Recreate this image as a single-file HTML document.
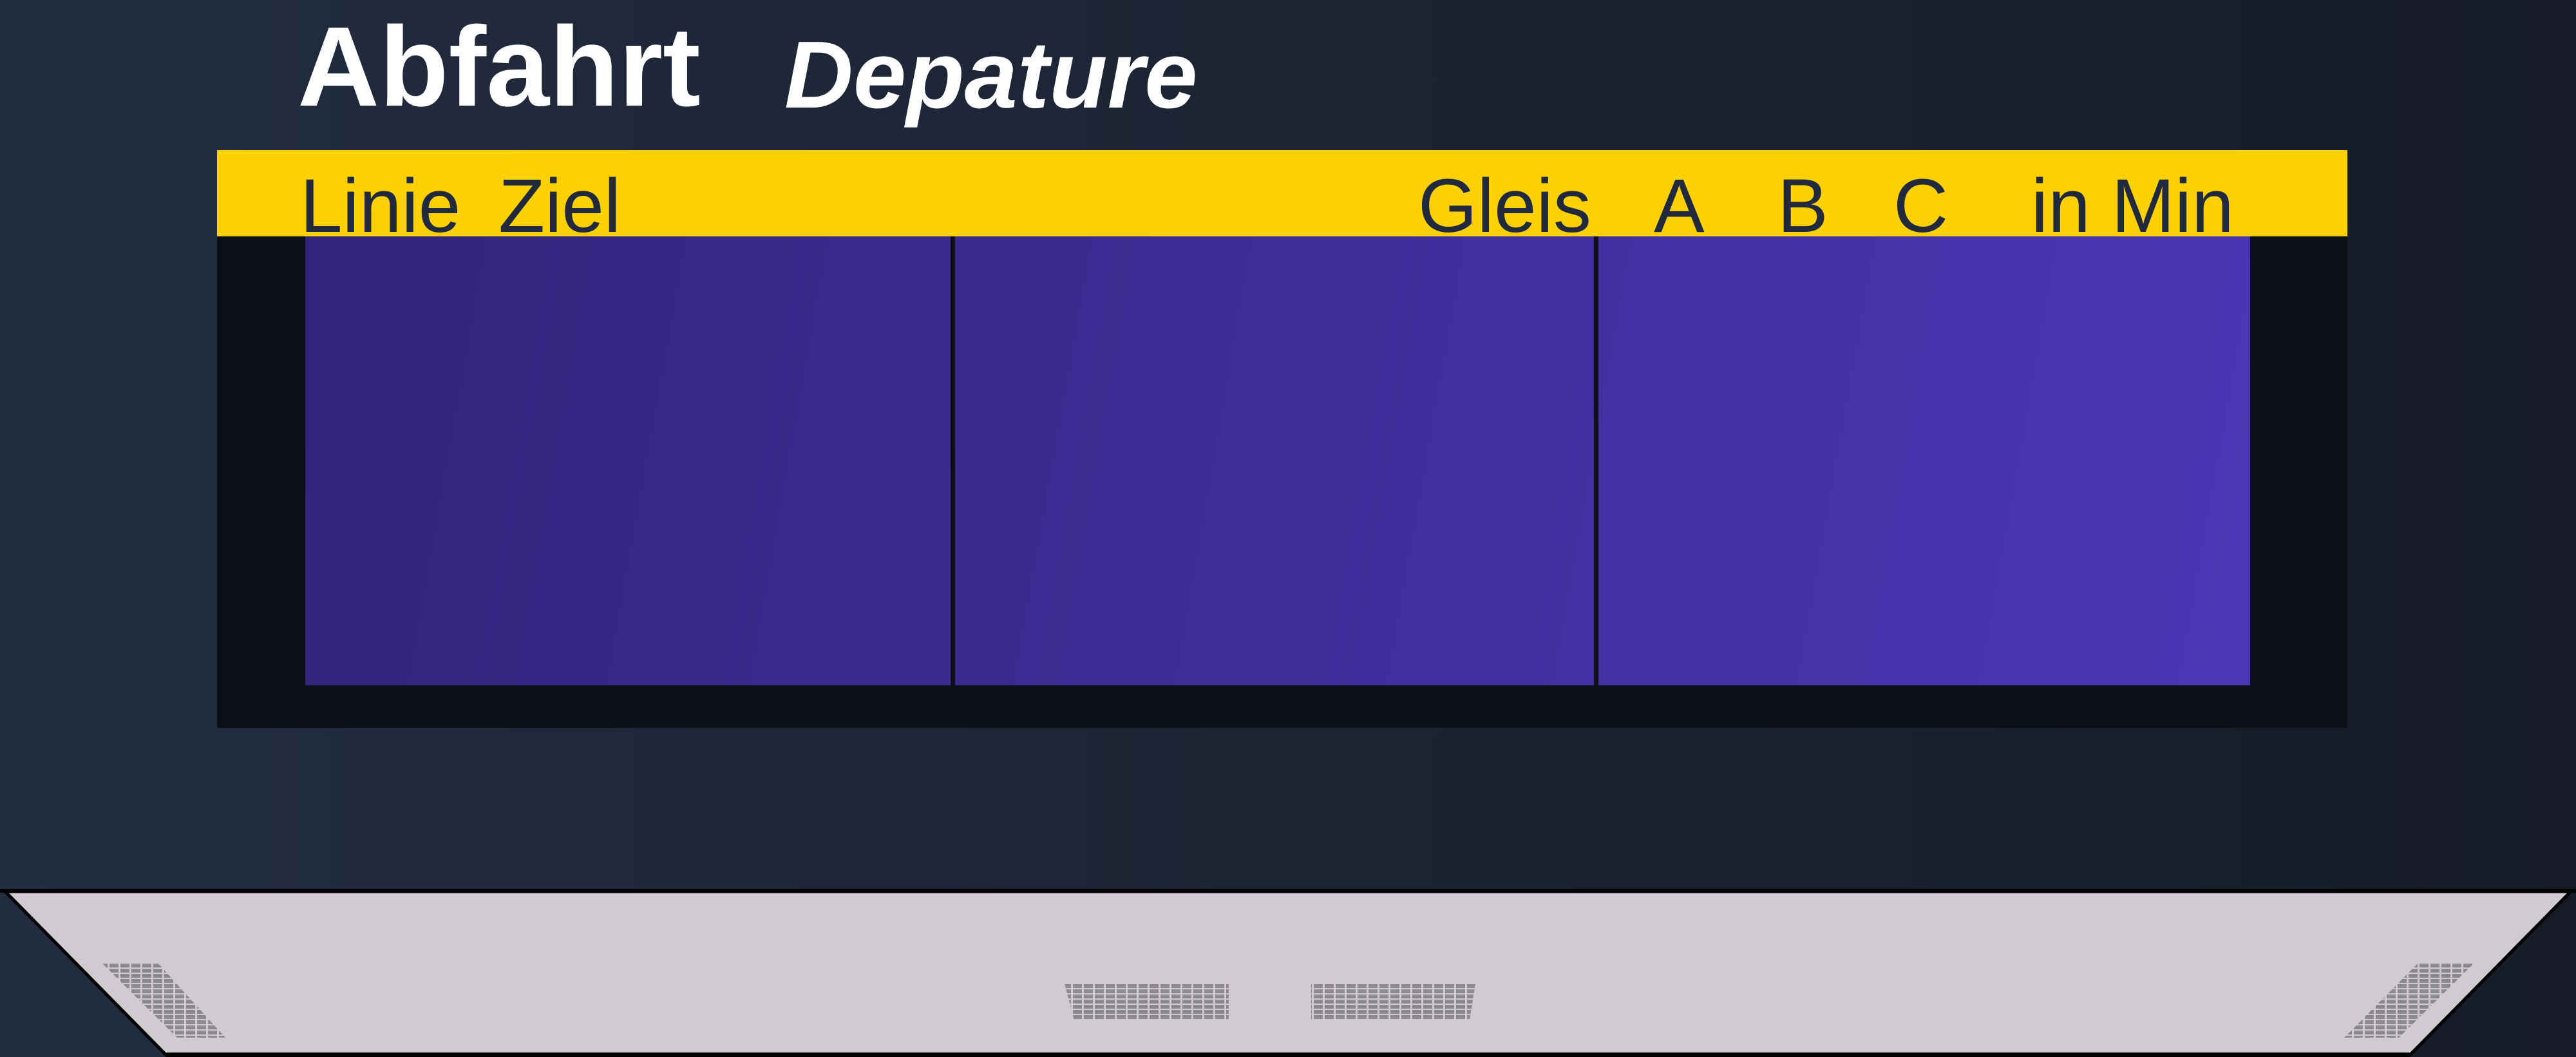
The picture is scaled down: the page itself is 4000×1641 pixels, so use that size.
<!DOCTYPE html>
<html><head><meta charset="utf-8"><style>
html,body{margin:0;padding:0}
body{width:4000px;height:1641px;position:relative;overflow:hidden;background:linear-gradient(90deg,#222d40,#161b27);font-family:"Liberation Sans",sans-serif}
.t{position:absolute;white-space:nowrap;line-height:1}
.h{color:#202a3c;font-size:118px;top:261px;position:absolute;line-height:1}
</style></head><body>
<div class="t" style="left:462px;top:16px;font-size:176px;font-weight:bold;color:#fff">Abfahrt</div>
<div class="t" style="left:1218px;top:43px;font-size:148px;font-weight:bold;font-style:italic;color:#fff">Depature</div>
<div style="position:absolute;left:337px;top:233px;width:3308px;height:134px;background:#ffd003"></div>
<div style="position:absolute;left:337px;top:367px;width:3308px;height:763px;background:#0c0f17"></div>
<div style="position:absolute;left:474px;top:367px;width:3020px;height:697px;background:linear-gradient(100deg,#33237a,#4c36b6)"></div>
<div style="position:absolute;left:1476px;top:367px;width:7px;height:697px;background:#0c0f17"></div>
<div style="position:absolute;left:2475px;top:367px;width:7px;height:697px;background:#0c0f17"></div>
<div class="h" style="left:466px">Linie</div>
<div class="h" style="left:774px">Ziel</div>
<div class="h" style="left:2202px">Gleis</div>
<div class="h" style="left:2568px">A</div>
<div class="h" style="left:2760px">B</div>
<div class="h" style="left:2940px">C</div>
<div class="h" style="left:3154px">in Min</div>
<svg style="position:absolute;left:0;top:0" width="4000" height="1641">
<defs>
<pattern id="v" width="17" height="8" patternUnits="userSpaceOnUse">
<rect width="17" height="8" fill="#d0cbd1"/><rect width="14" height="6" fill="#8b8891"/>
</pattern>
</defs>
<rect x="0" y="1380" width="4000" height="6" fill="#000"/>
<polygon points="8,1384 3992,1384 3742,1638 258,1638" fill="#d0cbd1" stroke="#000" stroke-width="5"/>
<rect x="258" y="1634" width="3484" height="7" fill="#000"/>
<polygon points="1653,1527 1908,1527 1908,1584 1668,1584" fill="url(#v)"/>
<polygon points="2036,1527 2291,1527 2282,1584 2036,1584" fill="url(#v)"/>
<polygon points="158,1495 245,1495 350,1611 275,1611" fill="url(#v)"/>
<polygon points="3755,1495 3842,1495 3725,1611 3640,1611" fill="url(#v)"/>
</svg>
</body></html>
